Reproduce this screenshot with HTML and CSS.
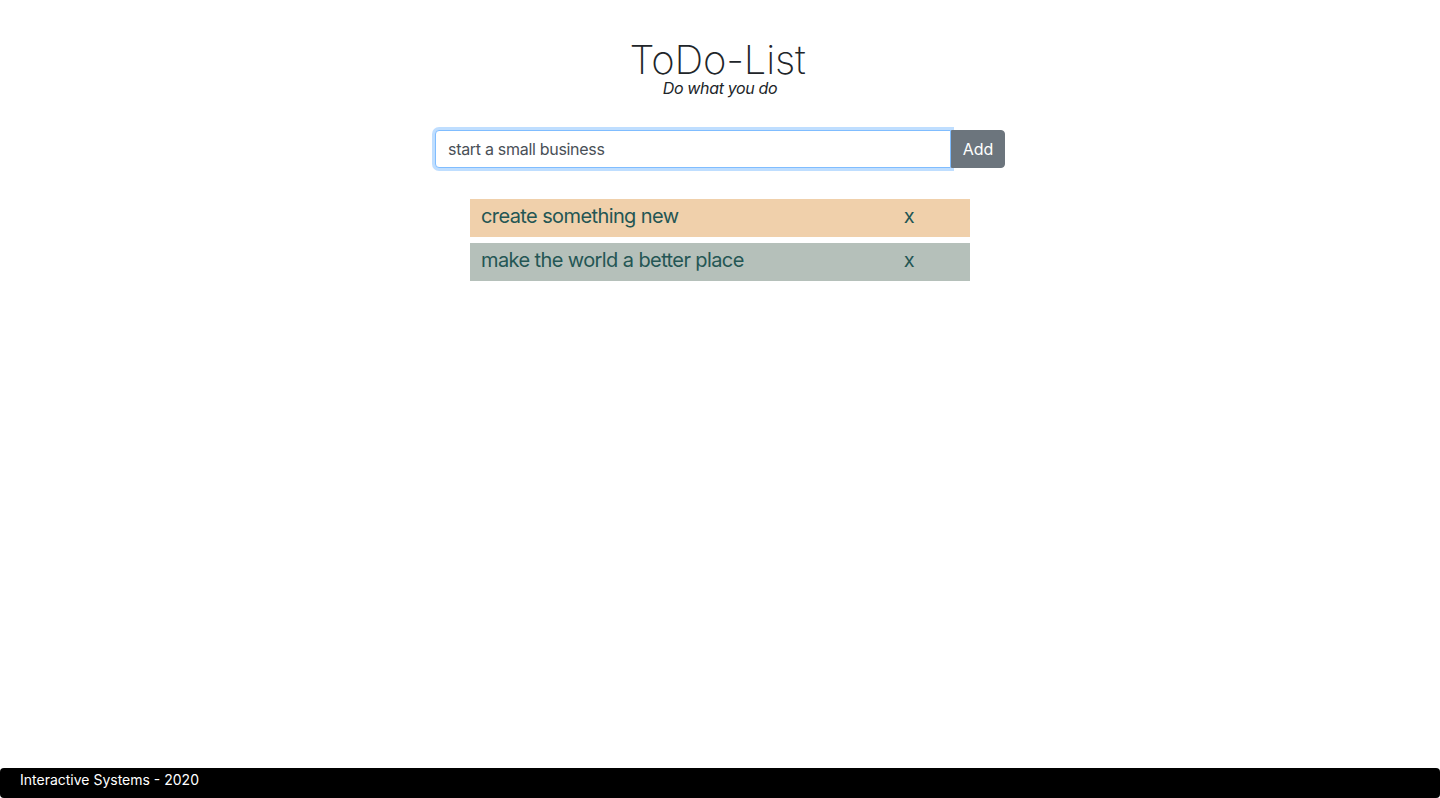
FILE: index.html
```html
<!DOCTYPE html>
<html lang="en">
<head>
<meta charset="utf-8">
<title>ToDo-List</title>
<link rel="stylesheet" href="styles.css">
</head>
<body>
<div class="page">
  <header class="header">
    <h1 class="title">ToDo-List</h1>
    <p class="subtitle">Do what you do</p>
  </header>
  <form class="input-group">
    <input class="form-control" type="text" value="start a small business">
    <button class="btn" type="button">Add</button>
  </form>
  <ul class="todo-list">
    <li class="todo-item peach"><span class="todo-text">create something new</span><span class="remove">x</span></li>
    <li class="todo-item sage"><span class="todo-text">make the world a better place</span><span class="remove">x</span></li>
  </ul>
</div>
<footer class="footer">Interactive Systems - 2020</footer>
</body>
</html>
```
FILE: styles.css
```css
* { box-sizing: border-box; }
html, body { margin: 0; padding: 0; height: 100%; }
body {
  font-family: Inter, "Noto Sans", "Liberation Sans", sans-serif;
  color: #212529;
  background: #fff;
  display: flex;
  flex-direction: column;
  min-height: 798px;
}
.page {
  flex: 1;
  display: flex;
  flex-direction: column;
  align-items: center;
  padding-top: 40px;
}
.header {
  display: flex;
  flex-direction: column;
  align-items: center;
}
.title {
  margin: 0 5px 0 0;
  font-size: 40px;
  font-weight: 200;
  line-height: 40px;
  letter-spacing: -0.2px;
  color: #212529;
}
.subtitle {
  margin: 0;
  font-size: 16px;
  font-style: italic;
  line-height: 16px;
  letter-spacing: -0.35px;
}
.input-group {
  display: flex;
  width: 570px;
  margin-top: 34px;
}
.form-control {
  flex: 1;
  height: 38px;
  padding: 6px 12px;
  font-family: inherit;
  font-size: 16px;
  letter-spacing: -0.3px;
  color: #495057;
  border: 1px solid #80bdff;
  border-radius: 4px 0 0 4px;
  box-shadow: 0 0 0 3px rgba(0, 123, 255, 0.25);
  outline: none;
}
.btn {
  width: 54px;
  height: 38px;
  font-family: inherit;
  font-size: 16px;
  color: #fff;
  background: #6c757d;
  border: 1px solid #6c757d;
  border-radius: 0 4px 4px 0;
  padding: 0;
}
.todo-list {
  list-style: none;
  margin: 31px 0 0;
  padding: 0;
  width: 500px;
  display: flex;
  flex-direction: column;
  gap: 6px;
}
.todo-item {
  height: 38px;
  display: flex;
  align-items: center;
  justify-content: space-between;
  padding: 0 56px 4px 11px;
  font-size: 20px;
  letter-spacing: -0.6px;
  color: #245654;
}
.peach { background: #f0d0ab; }
.sage { background: #b5c0ba; }
.footer {
  height: 30px;
  background: #000;
  color: #fff;
  font-size: 14px;
  padding: 3px 20px 0;
  border-radius: 4px;
}
```
